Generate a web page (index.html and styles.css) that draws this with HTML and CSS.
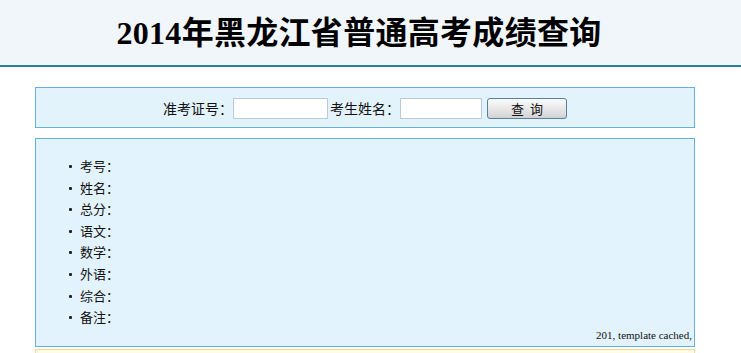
FILE: index.html
```html
<!DOCTYPE html>
<html lang="zh-CN">
<head>
<meta charset="utf-8">
<title>2014年黑龙江省普通高考成绩查询</title>
<link rel="stylesheet" href="styles.css">
</head>
<body>
<header class="top">
  <div class="top-inner">
    <h1 class="title">2014年黑龙江省普通高考成绩查询</h1>
  </div>
</header>
<main class="page">
  <form class="search">
    <label class="lbl">准考证号：</label><input class="field field-id" type="text"><label class="lbl lbl2">考生姓名：</label><input class="field field-name" type="text"><button class="btn" type="button">查 询</button>
  </form>
  <section class="result">
    <ul class="items">
      <li>考号：</li>
      <li>姓名：</li>
      <li>总分：</li>
      <li>语文：</li>
      <li>数学：</li>
      <li>外语：</li>
      <li>综合：</li>
      <li>备注：</li>
    </ul>
    <div class="note">201, template cached,</div>
  </section>
  <section class="notice"></section>
</main>
</body>
</html>
```

FILE: styles.css
```css
html, body {
  margin: 0;
  padding: 0;
  background: #ffffff;
}
body {
  font-family: "Noto Sans CJK SC", "Liberation Sans", sans-serif;
  color: #000;
  overflow: hidden;
}
.top {
  height: 65px;
  background: #f1f6fa;
  border-bottom: 2px solid #2a7f9e;
}
.top-inner {
  width: 718px;
  height: 65px;
  display: flex;
  align-items: center;
  justify-content: center;
}
.title {
  margin: 0;
  font-family: "Liberation Serif", "Noto Sans CJK SC", serif;
  font-weight: bold;
  font-size: 32px;
  line-height: 36px;
  color: #000;
  letter-spacing: 0.3px;
}
.page {
  width: 660px;
  margin: 20px 0 0 35px;
}
.search {
  box-sizing: border-box;
  height: 41px;
  margin: 0;
  background: #e3f3fc;
  border: 1px solid #63b1dc;
  display: flex;
  align-items: center;
  justify-content: center;
  padding-top: 1px;
}
.lbl {
  font-size: 14px;
  line-height: 20px;
  color: #111;
}
.lbl2 {
  margin-left: 2px;
}
.field {
  box-sizing: border-box;
  height: 21px;
  border: 1px solid #b9cad8;
  background: #fff;
  margin: 0;
  padding: 0 2px;
}
.field-id { width: 95px; }
.field-name { width: 82px; }
.btn {
  box-sizing: border-box;
  width: 80px;
  height: 21px;
  margin-left: 5px;
  padding: 0;
  border: 1px solid #58809f;
  border-radius: 3px;
  background: linear-gradient(#fbfbfb, #e6e6e6 55%, #d2d2d2);
  font-family: "Noto Sans CJK SC", sans-serif;
  font-size: 13px;
  line-height: 17px;
  color: #111;
  word-spacing: 3px;
}
.result {
  box-sizing: border-box;
  height: 209px;
  margin-top: 10px;
  background: #e3f3fd;
  border: 1px solid #63b1dc;
  display: flex;
  flex-direction: column;
  padding: 16px 2px 0 0;
}
.items {
  list-style: none;
  margin: 0;
  padding: 0 0 0 44px;
  flex: 1;
}
.items li {
  position: relative;
  font-size: 13px;
  line-height: 21.6px;
  height: 21.6px;
  color: #111;
}
.items li::before {
  content: "";
  position: absolute;
  left: -11px;
  top: 10px;
  width: 3px;
  height: 3px;
  background: #222;
  border-radius: 1px;
}
.note {
  text-align: right;
  font-family: "Liberation Serif", serif;
  font-size: 11px;
  line-height: 14px;
  padding-bottom: 4px;
  color: #111;
}
.notice {
  box-sizing: border-box;
  height: 40px;
  margin-top: 2px;
  background: #fffbe4;
  border: 1px solid #f3d98e;
}
```
